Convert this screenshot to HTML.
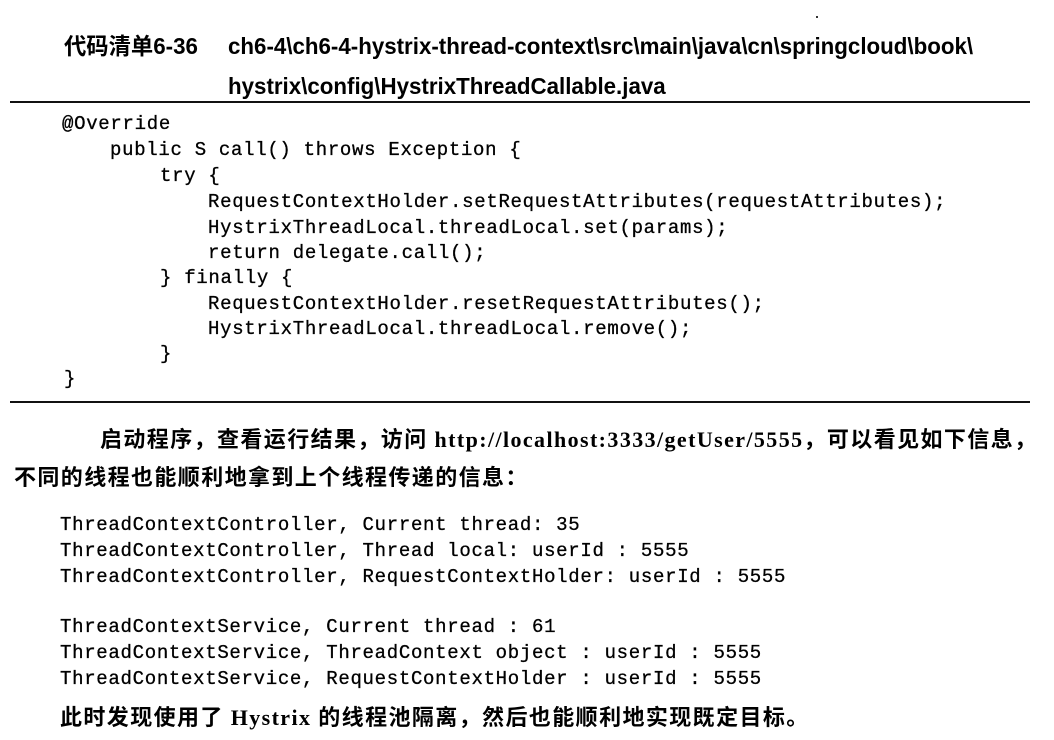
<!DOCTYPE html>
<html><head><meta charset="utf-8"><style>
html,body{margin:0;padding:0;background:#fff;}
body{width:1054px;height:740px;position:relative;overflow:hidden;color:#000;}
.l{position:absolute;white-space:pre;}
.c{font-family:"Liberation Mono",monospace;font-size:19px;letter-spacing:0.7px;height:24px;line-height:24px;-webkit-text-stroke:0.3px #000;}
.h{font-family:"Liberation Sans","Noto Sans CJK SC",sans-serif;font-weight:bold;font-size:23px;line-height:26px;transform:scaleX(0.97);transform-origin:left center;}
.p{font-family:"Liberation Serif","Noto Sans CJK SC",serif;font-size:22px;line-height:30px;letter-spacing:1.4px;font-weight:bold;}
.rule{position:absolute;left:10px;width:1020px;height:2px;background:#111;}
</style></head><body>
<div class="l h" style="left:64px;top:33px;">代码清单6-36</div>
<div class="l h" style="left:228px;top:33px;">ch6-4\ch6-4-hystrix-thread-context\src\main\java\cn\springcloud\book\</div>
<div class="l h" style="left:228px;top:73px;">hystrix\config\HystrixThreadCallable.java</div>
<div style="position:absolute;left:816px;top:16px;width:2px;height:2px;background:#333"></div>
<div class="rule" style="top:101px;"></div>
<div class="l c" style="left:62px;top:112px;">@Override</div>
<div class="l c" style="left:110px;top:138px;">public S call() throws Exception {</div>
<div class="l c" style="left:160px;top:164px;">try {</div>
<div class="l c" style="left:208px;top:190px;">RequestContextHolder.setRequestAttributes(requestAttributes);</div>
<div class="l c" style="left:208px;top:216px;">HystrixThreadLocal.threadLocal.set(params);</div>
<div class="l c" style="left:208px;top:241px;">return delegate.call();</div>
<div class="l c" style="left:160px;top:266px;">} finally {</div>
<div class="l c" style="left:208px;top:292px;">RequestContextHolder.resetRequestAttributes();</div>
<div class="l c" style="left:208px;top:317px;">HystrixThreadLocal.threadLocal.remove();</div>
<div class="l c" style="left:160px;top:342px;">}</div>
<div class="l c" style="left:64px;top:367px;">}</div>
<div class="rule" style="top:401px;"></div>
<div class="l p" style="left:100px;top:425px;">启动程序，查看运行结果，访问 http://localhost:3333/getUser/5555，可以看见如下信息，</div>
<div class="l p" style="left:14px;top:463px;">不同的线程也能顺利地拿到上个线程传递的信息：</div>
<div class="l c" style="left:60px;top:513px;">ThreadContextController, Current thread: 35</div>
<div class="l c" style="left:60px;top:539px;">ThreadContextController, Thread local: userId : 5555</div>
<div class="l c" style="left:60px;top:565px;">ThreadContextController, RequestContextHolder: userId : 5555</div>
<div class="l c" style="left:60px;top:615px;">ThreadContextService, Current thread : 61</div>
<div class="l c" style="left:60px;top:641px;">ThreadContextService, ThreadContext object : userId : 5555</div>
<div class="l c" style="left:60px;top:667px;">ThreadContextService, RequestContextHolder : userId : 5555</div>
<div class="l p" style="left:60px;top:703px;">此时发现使用了 Hystrix 的线程池隔离，然后也能顺利地实现既定目标。</div>
</body></html>
